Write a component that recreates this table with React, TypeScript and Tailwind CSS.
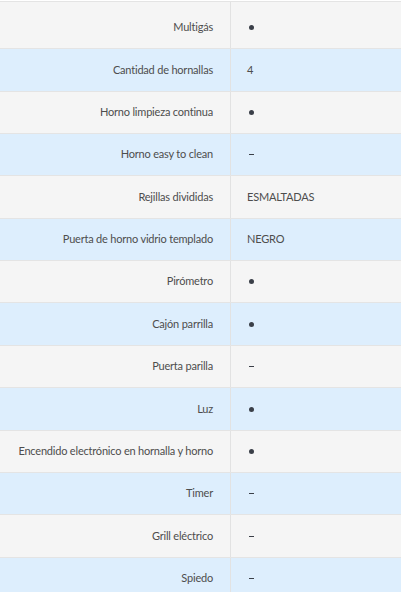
const rows: { label: string; value: string; h: string; pad?: boolean }[] = [
  { label: "Multigás", value: "•", h: "h-[47px]", pad: true },
  { label: "Cantidad de hornallas", value: "4", h: "h-[43px]" },
  { label: "Horno limpieza continua", value: "•", h: "h-[42px]" },
  { label: "Horno easy to clean", value: "–", h: "h-[42px]" },
  { label: "Rejillas divididas", value: "ESMALTADAS", h: "h-[43px]" },
  { label: "Puerta de horno vidrio templado", value: "NEGRO", h: "h-[42px]" },
  { label: "Pirómetro", value: "•", h: "h-[42px]" },
  { label: "Cajón parrilla", value: "•", h: "h-[43px]" },
  { label: "Puerta parilla", value: "–", h: "h-[42px]" },
  { label: "Luz", value: "•", h: "h-[43px]" },
  { label: "Encendido electrónico en hornalla y horno", value: "•", h: "h-[42px]" },
  { label: "Timer", value: "–", h: "h-[42px]" },
  { label: "Grill eléctrico", value: "–", h: "h-[43px]" },
  { label: "Spiedo", value: "–", h: "h-[42px]" },
];

export default function App() {
  return (
    <div className="w-[401px] h-[592px] overflow-hidden bg-white pt-px font-['Lato','Open_Sans',sans-serif] text-[11px] tracking-[-0.2px] text-[#4d4d4d]">
      <div className="border-t border-[#e4e4e4]">
        {rows.map((r, i) => (
          <div
            key={r.label}
            className={`flex border-b border-[#e4e4e4] ${r.h} ${i % 2 === 0 ? "bg-[#f5f5f5]" : "bg-[#ddeefd]"}`}
          >
            <div
              className={`w-[231px] shrink-0 flex items-center justify-end whitespace-nowrap pr-[17px] border-r border-[#e2e2e2] ${r.pad ? "pt-[4px]" : ""}`}
            >
              {r.label}
            </div>
            <div className={`flex-1 flex items-center pl-[16px] whitespace-nowrap ${r.pad ? "pt-[4px]" : ""}`}>
              {r.value === "•" ? (
                <span className="inline-block w-[5px] h-[5px] rounded-full bg-[#3a3f48] ml-[2px]" />
              ) : r.value === "–" ? (
                <span className="inline-block w-[5px] h-px bg-[#3a3f48] ml-[2px]" />
              ) : (
                r.value
              )}
            </div>
          </div>
        ))}
      </div>
    </div>
  );
}
